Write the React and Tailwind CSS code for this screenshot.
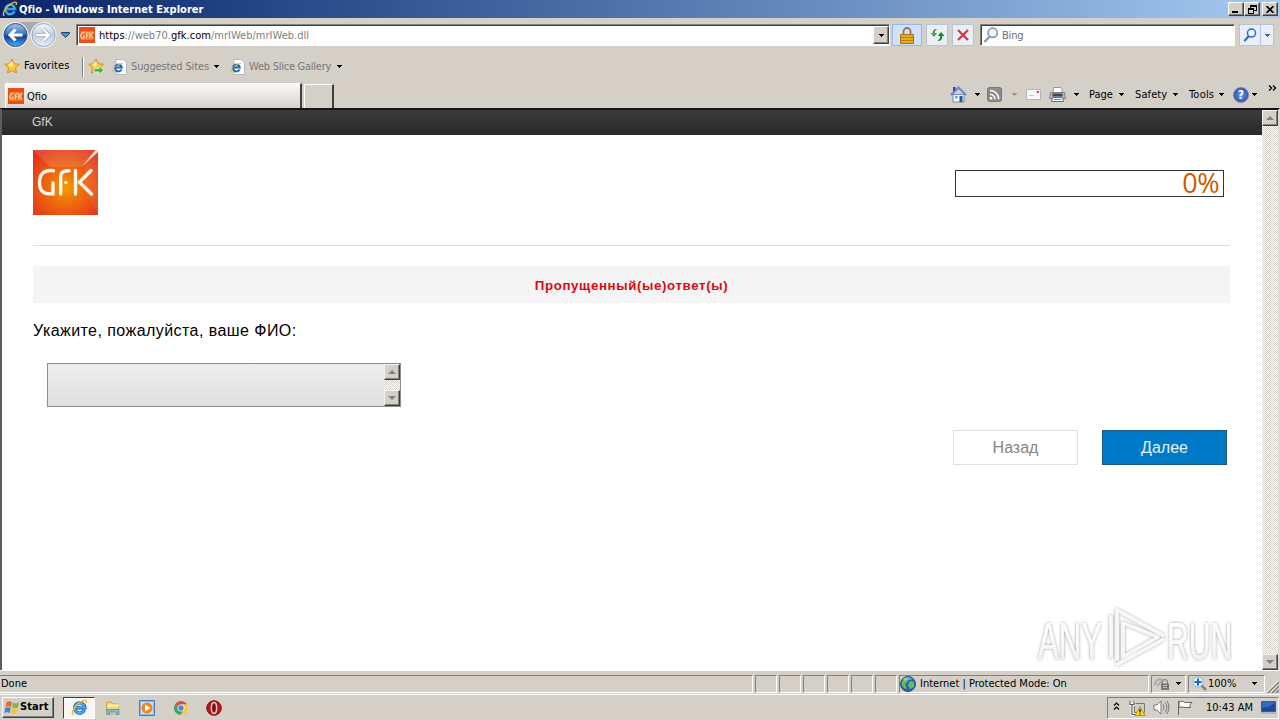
import clsx from "clsx";

const statusPanes = [1, 2, 3, 4, 5, 6];

function Caret({ className, color = "#000" }) {
  return (
    <svg width="6" height="3" viewBox="0 0 6 3" className={clsx("shrink-0", className)} shapeRendering="crispEdges">
      <path d="M0 0h6L3 3z" fill={color} />
    </svg>
  );
}

function IeLogo({ size, className }) {
  return (
    <svg width={size} height={size} viewBox="0 0 16 16" className={clsx("shrink-0", className)}>
      <path d="M12.6 10.4A4.8 4.8 0 1 1 13 8.2H4.6" fill="none" stroke="#1c5fb4" strokeWidth="3.2" />
      <path d="M12.4 10.4A4.7 4.7 0 1 1 12.8 8H4.8" fill="none" stroke="#4cb0ee" strokeWidth="1.7" />
      <path d="M2.6 14.6C-.8 14.4 3 6.500 8.600 3 12.500.4 15.800.4 14 4" fill="none" stroke="#eebc34" strokeWidth="1.4" />
    </svg>
  );
}

function IePage({ className }) {
  return (
    <svg width="15" height="16" viewBox="0 0 15 16" className={clsx("shrink-0", className)}>
      <path d="M4 .5h7l3.500 3V15.500H4z" fill="#fff" stroke="#b4b8be" />
      <path d="M9.500 10.500A3.400 3.400 0 1 1 9.800 8.500H3.400" fill="none" stroke="#1b69be" strokeWidth="2" />
      <path d="M1 13C0 10 5 5 11 4.500" fill="none" stroke="#e5b52c" />
    </svg>
  );
}

function GfkIcon({ className }) {
  return (
    <svg width="16" height="16" viewBox="0 0 16 16" className={clsx("shrink-0", className)}>
      <rect width="16" height="16" fill="#e94e1b" />
      <rect x="2" y="4" width="12" height="9" fill="#f27a24" />
      <g fill="none" stroke="#fbd3b8" strokeWidth="1.100">
        <path d="M5.500 5.500C1 4.500 1 11 3 11h2V8.500" />
        <path d="M7.500 11.500V7c0-1 .5-1.500 2-1.500M7.500 8.500H9" />
        <path d="M10.800 5v6.500M14.500 5 11.500 8.200l3 3.300" />
      </g>
    </svg>
  );
}

function GfkLogo() {
  return (
    <svg width="65" height="65" viewBox="0 0 65 65" className="shrink-0">
      <defs>
        <radialGradient id="gfk" cx="50%" cy="58%" r="66%">
          <stop offset="0" stopColor="#f59a00" />
          <stop offset=".4" stopColor="#ee6c0c" />
          <stop offset="1" stopColor="#e2321b" />
        </radialGradient>
      </defs>
      <rect width="65" height="65" fill="url(#gfk)" />
      <path d="M0 0h65L48 17H17z" fill="#fff" opacity=".12" />
      <path d="M65 0v65L52 40V13z" fill="#fff" opacity=".08" />
      <path d="M62.500 0H65v2L48 17.500z" fill="#fbd9c4" />
      <g fill="none" stroke="#fff6ec" strokeWidth="3.400" strokeLinecap="round">
        <path d="M20.500 20.700C11 19.500 6.500 24 6.500 32.500c0 8.500 4 12 13.500 11.300V33" />
        <path d="M27.700 44V27c0-4.500 2.500-6.500 8.500-6.300" />
        <path d="M42.500 20.500V44" />
        <path d="M58 20.500 46.500 32.300 58.500 44" />
      </g>
      <circle cx="33" cy="32.500" r="1.800" fill="#fff6ec" />
    </svg>
  );
}

function NavArrows() {
  return (
    <svg width="58" height="28" viewBox="0 0 58 28" className="ml-[1px] shrink-0">
      <defs>
        <linearGradient id="back" x2="0" y2="1">
          <stop offset="0" stopColor="#a8c6ea" />
          <stop offset=".45" stopColor="#3a75c4" />
          <stop offset=".55" stopColor="#0f3f94" />
          <stop offset="1" stopColor="#4fb0f0" />
        </linearGradient>
        <linearGradient id="fwd" x2="0" y2="1">
          <stop offset="0" stopColor="#f4f7fb" />
          <stop offset=".5" stopColor="#c3cede" />
          <stop offset="1" stopColor="#e6edf6" />
        </linearGradient>
      </defs>
      <path d="M14 1h28v7c-8 6-20 6-28 0z" fill="#a9a9b2" />
      <circle cx="14.500" cy="14" r="13" fill="#eef0f4" />
      <circle cx="42.500" cy="14" r="13" fill="#eef0f4" />
      <circle cx="14.500" cy="14" r="11.500" fill="url(#back)" stroke="#274f8d" />
      <circle cx="42.500" cy="14" r="11.500" fill="url(#fwd)" stroke="#9aa5b8" />
      <path d="M21.500 14H9.500M14.500 8.500 9 14l5.500 5.500" fill="none" stroke="#fff" strokeWidth="3" />
      <path d="M35.500 14h12M42.500 8.500 48 14l-5.500 5.500" fill="none" stroke="#98a4b6" strokeWidth="3.800" />
      <path d="M35.500 14h12M42.500 8.500 48 14l-5.500 5.500" fill="none" stroke="#fff" strokeWidth="2.400" />
    </svg>
  );
}

function Star({ add, className }) {
  return (
    <svg width="17" height="17" viewBox="0 0 17 17" className={clsx("shrink-0", className)}>
      <path d="M8 1l2.200 4.700 5.100.6-3.800 3.500 1 5.200L8 12.500 3.500 15l1-5.200L.8 6.300l5.100-.6z" fill="#fbc834" stroke="#d4881c" strokeWidth=".9" />
      <path d="M8 3.500 9.400 6.700 8 9 4 7z" fill="#fff1a0" />
      {add && <path d="M6 10.500h5V8l5 4-5 4.500v-2.500H6z" fill="#45b83c" stroke="#e8f7e2" strokeWidth=".8" />}
    </svg>
  );
}

function Magnifier({ size, color, className }) {
  return (
    <svg width={size} height={size} viewBox="0 0 16 16" className={clsx("shrink-0", className)}>
      <path d="M1.500 15 6.500 9.500" stroke={color} strokeWidth="2.500" />
      <circle cx="9.700" cy="5.800" r="4.600" fill="#edf6ff" stroke={color} strokeWidth="1.700" />
    </svg>
  );
}

function WinButton({ children, className }) {
  return (
    <div className={clsx("grid h-[14px] w-4 place-items-center border border-t-white border-r-[#404040] border-b-[#404040] border-l-white bg-[#d4d0c8] shadow-[inset_-1px_-1px_#808080]", className)}>
      {children}
    </div>
  );
}

function ScrollButton({ down }) {
  return (
    <div className="grid h-4 w-4 shrink-0 place-items-center border border-t-[#f4f2ee] border-r-[#404040] border-b-[#404040] border-l-[#f4f2ee] bg-[#d4d0c8] shadow-[inset_-1px_-1px_#808080]">
      <svg width="8" height="4" viewBox="0 0 8 4">
        <path d={down ? "M0 0h8L4 4z" : "M0 4h8L4 0z"} fill="#808080" />
      </svg>
    </div>
  );
}

function ScrollTrack({ className }) {
  return (
    <div className={clsx("flex w-4 shrink-0 flex-col justify-between bg-[repeating-conic-gradient(#fff_0_25%,#d4d0c8_0_50%)] bg-[length:2px_2px]", className)}>
      <ScrollButton />
      <ScrollButton down />
    </div>
  );
}

function TitleBar() {
  return (
    <div className="flex h-[18px] items-center bg-linear-to-r from-[#0a246a] to-[#a6caf0] pl-[2px]">
      <IeLogo size={16} />
      <div className="ml-[1px] flex-1 pt-[2px] text-[11px] font-bold tracking-[0.03px] whitespace-nowrap text-white">Qfio - Windows Internet Explorer</div>
      <WinButton>
        <svg width="8" height="8"><path d="M0 6h6v2H0z" /></svg>
      </WinButton>
      <WinButton>
        <svg width="9" height="9" fill="none" stroke="#000" shapeRendering="crispEdges"><path d="M2.500 3V.5h6v5H6M3 1.500h5M.5 3.500h5v5h-5zM1 4.500h4" /></svg>
      </WinButton>
      <WinButton className="mr-[2px] ml-[2px]">
        <svg width="8" height="7" stroke="#000" strokeWidth="1.600"><path d="M.5 0l7 7M7.500 0l-7 7" /></svg>
      </WinButton>
    </div>
  );
}

function AddressBar() {
  return (
    <div className="flex h-[34px] items-center">
      <NavArrows />
      <svg width="9" height="6" className="ml-[2px]"><path d="M.5.5h8v1L4.500 5.500.5 1.500z" fill="#4a92c8" stroke="#1c4472" /></svg>
      <div className="ml-[6px] flex h-[22px] w-[814px] items-center border border-t-[#808080] border-r-white border-b-white border-l-[#808080] bg-white shadow-[inset_1px_1px_#404040]">
        <GfkIcon className="ml-[2px]" />
        <div className="ml-[4px] flex-1 pt-[3px] text-[11px] tracking-[0.02px] whitespace-nowrap text-[#808080]">
          <span className="text-black">https</span>://web70.<span className="text-black">gfk.com</span>/mrIWeb/mrIWeb.dll
        </div>
        <div className="grid h-[18px] w-4 place-items-center border border-t-white border-r-[#404040] border-b-[#404040] border-l-white bg-[#d4d0c8] shadow-[inset_-1px_-1px_#808080]">
          <Caret />
        </div>
      </div>
      <div className="ml-[2px] grid h-[22px] w-[30px] place-items-center border border-[#94b8e8] bg-[#cfe2fb]">
        <svg width="14" height="17" viewBox="0 0 14 17">
          <path d="M3.500 8V4.500a3.500 3.500 0 0 1 7 0V8" fill="none" stroke="#8d7a45" strokeWidth="1.800" />
          <path d="M.5 7.500h13v9H.5z" fill="#e8aa25" stroke="#a97512" />
          <path d="M1 10.500h12M1 13.500h12" stroke="#b97f12" />
        </svg>
      </div>
      <div className="ml-[4px] grid h-[22px] w-[22px] place-items-center border border-[#b6c3da] bg-[#e9eef7]">
        <svg width="15" height="14" viewBox="0 0 15 14">
          <path d="M6.500 1C3.500 1 2.500 3 2.700 5H.5L4 9l3.200-4H5C4.800 3.500 5 2.500 6.500 2z" fill="#43a545" />
          <path d="M8 13c3 0 4.500-2 4.300-5H14.500L11 4 7.800 8H10c.2 2-.3 3.500-2 4z" fill="#23832b" />
        </svg>
      </div>
      <div className="ml-[4px] grid h-[22px] w-[22px] place-items-center border border-[#b6c3da] bg-[#e9eef7]">
        <svg width="12" height="12" stroke="#cb3a43" strokeWidth="2.200"><path d="M1 1l10 10M11 1 1 11" /></svg>
      </div>
      <div className="ml-[6px] flex h-[22px] w-[255px] items-center border border-t-[#808080] border-r-white border-b-white border-l-[#808080] bg-white shadow-[inset_1px_1px_#404040]">
        <Magnifier size={16} color="#8c9bb0" className="ml-[2px]" />
        <div className="ml-[3px] pt-[3px] text-[11px] tracking-[-0.2px] text-[#6d6d6d]">Bing</div>
      </div>
      <div className="ml-[4px] flex h-[22px] w-[35px] items-center border border-[#b6c3da] bg-[#e9eef7]">
        <Magnifier size={14} color="#2c68cf" className="ml-[3px]" />
        <div className="ml-[3px] grid h-full w-[13px] place-items-center border-l border-[#b6c3da]">
          <Caret color="#2b62ae" />
        </div>
      </div>
    </div>
  );
}

function FavoritesBar() {
  return (
    <div className="flex h-[29px] items-center text-[11px] whitespace-nowrap">
      <Star className="ml-[4px]" />
      <div className="ml-[3px] w-[58px] tracking-[0.1px]">Favorites</div>
      <div className="h-[20px] w-[2px] border-r border-l border-r-white border-l-[#808080]" />
      <Star add className="ml-[4px]" />
      <IePage className="ml-[7px]" />
      <div className="ml-[4px] w-[82px] pt-[1px] tracking-[-0.13px] text-[#777]">Suggested Sites</div>
      <Caret />
      <IePage className="ml-[11px]" />
      <div className="ml-[4px] w-[87px] pt-[1px] tracking-[-0.25px] text-[#777]">Web Slice Gallery</div>
      <Caret />
    </div>
  );
}

function TabRow() {
  return (
    <div className="flex h-[27px] items-end text-[11px] whitespace-nowrap">
      <div className="ml-[5px] flex h-[25px] w-[297px] items-center border-t border-r-2 border-l border-t-white border-r-[#404040] border-l-white bg-linear-to-b from-[#faf9f8] to-[#d6d2cb] pl-[2px]">
        <GfkIcon />
        <div className="ml-[3px] pt-[2px]">Qfio</div>
      </div>
      <div className="ml-[2px] h-[24px] w-[30px] border-t border-r-2 border-l border-t-white border-r-[#404040] border-l-white" />
      <div className="ml-auto flex h-[27px] items-center">
        <svg width="17" height="17" viewBox="0 0 17 17">
          <path d="M3 8.500h11V16H3z" fill="#f5f8fc" stroke="#7485a5" />
          <path d="M1 9 8.500 1.500 16 9" fill="none" stroke="#6889c4" strokeWidth="2" />
          <path d="M3 1h2.500v3L3 6z" fill="#2c4ca0" />
          <path d="M5 10h2.500v2.500H5z" fill="#57a2dc" />
          <path d="M9.500 10h3v6h-3z" fill="#26569d" />
        </svg>
        <Caret className="ml-[7px]" />
        <svg width="15" height="15" viewBox="0 0 15 15" className="ml-[7px]">
          <rect x=".5" y=".5" width="14" height="14" rx="2" fill="#8c8c8c" stroke="#777" />
          <g fill="none" stroke="#fff" strokeWidth="1.500"><path d="M3 7.200a5 5 0 0 1 5 5M3 3.500a8.700 8.700 0 0 1 8.700 8.700" /></g>
          <circle cx="4" cy="11.200" r="1.300" fill="#fff" />
        </svg>
        <Caret className="ml-[9px]" color="#9a968e" />
        <svg width="15" height="11" viewBox="0 0 15 11" className="ml-[9px]">
          <path d="M.5.5h14v10H.5z" fill="#f8f8f8" stroke="#b5b5b5" />
          <path d="M10.500 2h2.500v2h-2.500z" fill="#d0505c" /><path d="M3 6.500h5" stroke="#c4c4c4" />
        </svg>
        <svg width="17" height="16" viewBox="0 0 17 16" className="ml-[8px]">
          <path d="M4.500.5h7l1.500 2V7h-9z" fill="#fff" stroke="#8d99a8" />
          <path d="M1.500 5.500h14l1 6h-16z" fill="#b4b7bc" stroke="#7c828a" />
          <path d="M3.500 6.500h10v3h-10z" fill="#42474f" />
          <path d="M3.500 10.500h10l1 4h-12z" fill="#e8f4fb" stroke="#687786" />
          <path d="M5 12.500h7" stroke="#46a7c7" />
        </svg>
        <Caret className="ml-[7px]" />
        <div className="ml-[10px] w-[29px] pt-[2px] tracking-[-0.05px]">Page</div>
        <Caret />
        <div className="ml-[11px] w-[37px] pt-[2px] tracking-[0.1px]">Safety</div>
        <Caret />
        <div className="ml-[11px] w-[29px] pt-[2px] tracking-[0.2px]">Tools</div>
        <Caret />
        <div className="ml-[9px] grid h-4 w-4 place-items-center rounded-full border border-[#7484b4] bg-radial from-[#6b9ded] to-[#173b96] text-[12px] leading-none font-bold text-white">?</div>
        <Caret className="ml-[2px]" />
        <svg width="9" height="6" className="mr-[3px] mb-[13px] ml-[11px]" fill="none" stroke="#000" strokeWidth="1.300"><path d="M1 .5l2.500 2.500L1 5.500M5 .5l2.500 2.500L5 5.500" /></svg>
      </div>
    </div>
  );
}

function Watermark() {
  return (
    <svg width="208" height="66" viewBox="0 0 208 66" className="absolute top-[494px] left-[1030px]">
      <defs>
        <filter id="soft" x="-20%" y="-20%" width="140%" height="140%">
          <feDropShadow dx="0" dy="0" stdDeviation="1.500" floodColor="#000" floodOpacity=".42" />
        </filter>
        <linearGradient id="fade" x2="0" y2="1">
          <stop offset="0" stopColor="#fff" />
          <stop offset=".45" stopColor="#fcfcfc" />
          <stop offset="1" stopColor="#ebebeb" />
        </linearGradient>
      </defs>
      <g filter="url(#soft)" fill="url(#fade)" fontFamily="Liberation Sans, sans-serif" fontSize="51">
        <text transform="translate(6 55) scale(.61 1)">ANY</text>
        <text transform="translate(135 55) scale(.59 1)">RUN</text>
        <g fill="none" stroke="#f7f7f7" strokeWidth="3.500" strokeLinejoin="round">
          <path d="M91 19 126 33 91 53z" />
          <path d="M79 54V11M85 57V6l47 26M84 61l48-26" />
        </g>
      </g>
    </svg>
  );
}

function Survey() {
  return (
    <div className="relative flex h-[562px] border-t-2 border-r-2 border-l-2 border-t-[#151515] border-r-[#dedbd5] border-l-[#5c5c5c] bg-white font-['Liberation_Sans',Arial,sans-serif]">
      <div className="min-w-0 flex-1">
        <div className="flex h-[25px] items-center bg-linear-to-b from-[#3b3b3b] to-[#292929] pb-[1px] pl-[30px] text-[12px] text-[#d0d0d0]">GfK</div>
        <div className="mr-[32px] ml-[31px]">
          <div className="flex h-[111px] items-start justify-between border-b border-[#dedede] pt-[15px]">
            <GfkLogo />
            <div className="mt-[20px] mr-[6px] flex h-[27px] w-[269px] items-center justify-end border border-[#333] pr-[4px] pb-[2px] font-['Open_Sans',sans-serif] text-[27px] leading-none tracking-[-0.5px] text-[#d05800]">0%</div>
          </div>
          <div className="mt-[20px] flex h-[37px] items-center justify-center bg-[#f4f4f4] pt-[2px] text-[13.300px] font-bold tracking-[0.62px] text-[#dc0a12]">Пропущенный(ые)ответ(ы)</div>
          <div className="mt-[16px] h-6 text-[16px] leading-6 tracking-[0.44px] text-black">Укажите, пожалуйста, ваше ФИО:</div>
          <div className="mt-[20px] ml-[14px] flex h-[44px] w-[354px] justify-end border border-[#8c8c8c] bg-linear-to-b from-[#eeeeee] to-[#e0e0e0]">
            <ScrollTrack />
          </div>
          <div className="mt-[23px] mr-[3px] flex justify-end gap-6 text-[16px]">
            <button className="h-[35px] w-[125px] border border-[#dedede] bg-white text-[#858585]">Назад</button>
            <button className="h-[35px] w-[125px] border border-[#1c5582] bg-[#007ac6] text-[#e2f3ff]">Далее</button>
          </div>
        </div>
      </div>
      <ScrollTrack />
      <Watermark />
    </div>
  );
}

function Pane({ children, className }) {
  return (
    <div className={clsx("flex h-[18px] shrink-0 items-center border border-t-[#808080] border-r-white border-b-white border-l-[#808080]", className)}>{children}</div>
  );
}

function StatusBar() {
  return (
    <div className="flex h-[24px] items-center gap-[2px] border-t border-white pt-[2px] text-[11px] whitespace-nowrap">
      <Pane className="w-[753px] border-l-0 pt-[1px] pl-[1px]">Done</Pane>
      {statusPanes.map((pane) => <Pane key={pane} className="w-[22px]" />)}
      <Pane className="w-[250px]">
        <svg width="16" height="16" viewBox="0 0 16 16">
          <circle cx="8" cy="8" r="7.500" fill="#2766b5" stroke="#285075" />
          <path d="M3 3c3-2 6-1 5 2L5 8l2 5c-3 0-6-4-5-7zM10 5l4 1v5l-4 2-2-4z" fill="#63bf55" />
          <path d="M4 2.500C7 .5 11 1 12 4 9 3 7 4 4 5z" fill="#a9dcf3" opacity=".7" />
        </svg>
        <div className="ml-[4px] pt-[1px]">Internet | Protected Mode: On</div>
      </Pane>
      <Pane className="w-[35px]">
        <svg width="17" height="15" viewBox="0 0 17 15" className="ml-[2px]">
          <path d="M1 9c0-5 4-7 8-5M3 10l5-5" fill="none" stroke="#aaa" strokeWidth="2" />
          <path d="M8.500 8V6a2.500 2.500 0 0 1 5 0v2" fill="none" stroke="#777" />
          <path d="M7 7.500h8V14H7z" fill="#777" /><path d="M9 9.500h4M9 11.500h4" stroke="#bbb" />
        </svg>
        <Caret className="ml-[4px]" />
      </Pane>
      <Pane className="w-[77px]">
        <svg width="15" height="15" viewBox="0 0 15 15" className="ml-[3px]">
          <path d="M9 9l5 5" stroke="#9a8057" strokeWidth="2.500" />
          <circle cx="6" cy="6" r="5" fill="#e8f3ff" stroke="#8cb4e4" />
          <path d="M6 2.500v7M2.500 6h7" stroke="#1869cf" strokeWidth="2" />
        </svg>
        <div className="ml-[1px] w-[43px] pt-[1px]">100%</div>
        <Caret />
      </Pane>
      <svg width="12" height="12" className="mt-[6px]" strokeWidth="1.500"><path d="M1 12 12 1M5 12l7-7M9 12l3-3" stroke="#808080" /><path d="M0 11 11 0M4 11l7-7" stroke="#fff" strokeWidth=".7" /></svg>
    </div>
  );
}

function Taskbar() {
  return (
    <div className="flex h-[26px] items-center border-t border-white text-[11px] whitespace-nowrap">
      <div className="ml-[2px] flex h-[21px] w-[52px] items-center border border-t-white border-r-[#404040] border-b-[#404040] border-l-white pl-[1px] font-bold shadow-[inset_-1px_-1px_#808080]">
        <svg width="16" height="15" viewBox="0 0 16 15">
          <path d="M2.500 2Q5 .5 8 2L7 7Q4 5.500 1.500 7z" fill="#eb6a2d" />
          <path d="M9 2.300Q12 4 15 2.300L14 7.500Q11 9 8 7.300z" fill="#85b944" />
          <path d="M1.200 8Q4 6.500 6.700 8L5.700 13Q3 11.500.2 13z" fill="#4389d0" />
          <path d="M7.800 8.300Q11 10 13.800 8.500L12.700 13.500Q9.500 15 6.700 13.300z" fill="#f5c431" />
        </svg>
        <div className="tracking-[0.1px]">Start</div>
      </div>
      <div className="ml-[9px] grid h-[22px] w-[32px] place-items-center border border-t-[#404040] border-r-white border-b-white border-l-[#404040] bg-[#f8f7f5]">
        <IeLogo size={17} />
      </div>
      <svg width="16" height="16" viewBox="0 0 16 16" className="ml-[10px]">
        <path d="M1.500 2h5l1 2h6v10h-12z" fill="#f3d974" stroke="#c9a94a" />
        <path d="M3 5.500h11" stroke="#fff5c4" strokeWidth="2" />
        <path d="M2 14.500V9.500h12v5h-2.500V12h-7v2.500z" fill="#79bce5" stroke="#4b94c5" strokeWidth=".8" />
      </svg>
      <svg width="16" height="16" viewBox="0 0 16 16" className="ml-[18px]">
        <path d="M.5.5h15v15H.5z" fill="#8bb9e5" stroke="#477fb5" />
        <path d="M2 2h12v12H2z" fill="#c9e1f6" />
        <circle cx="8" cy="8" r="5.500" fill="#f0841e" />
        <path d="M6 4.500 11.500 8 6 11.500z" fill="#fff" />
      </svg>
      <svg width="16" height="16" viewBox="0 0 16 16" className="ml-[18px]">
        <path d="M8 8 2 4.400A7 7 0 0 1 14 4.500H8z" fill="#de4b3c" />
        <path d="M8 8 2 4.400A7 7 0 0 0 7.500 15L11 9.500z" fill="#3ba55a" />
        <path d="M8 4.500h6A7 7 0 0 1 7.500 15L11 9.500z" fill="#f6cb38" />
        <circle cx="8" cy="8" r="3.500" fill="#f5f5f5" /><circle cx="8" cy="8" r="2.700" fill="#4686e2" />
      </svg>
      <svg width="16" height="16" viewBox="0 0 16 16" className="ml-[17px]">
        <circle cx="8" cy="8" r="7.300" fill="#b8161c" stroke="#861014" />
        <ellipse cx="8" cy="8" rx="2.600" ry="5.400" fill="#7c0c12" stroke="#f0cfcc" strokeWidth="1.500" />
      </svg>
      <div className="mr-[1px] ml-auto flex h-[22px] w-[172px] items-center border border-t-[#808080] border-r-white border-b-white border-l-[#808080]">
        <svg width="7" height="8" className="mb-[3px] ml-[5px]" fill="none" stroke="#000" strokeWidth="1.200"><path d="M1 3.500 3.500 1 6 3.500M1 7.500 3.500 5 6 7.500" /></svg>
        <svg width="17" height="16" viewBox="0 0 17 16" className="ml-[9px]">
          <path d="M5.500 3.500h10v9h-10z" fill="#cfcfc9" stroke="#777" />
          <path d="M1 .5v4h4v-4M3 4.500v10h4" fill="none" stroke="#fff" strokeWidth="2.500" />
          <path d="M1 .5v4h4v-4M3 4.500v10h4" fill="none" stroke="#555" strokeWidth="1.100" />
          <path d="M11 6.500l5 9H6z" fill="#ffde24" stroke="#a08214" strokeWidth=".8" /><path d="M11 9v3.500M11 13.500v1" stroke="#111" strokeWidth="1.300" />
        </svg>
        <svg width="17" height="15" viewBox="0 0 17 15" className="ml-[7px]" fill="none" stroke="#777">
          <path d="M1 5h3l4-4v13l-4-4H1z" fill="#fff" /><path d="M10 4.500q2 3 0 6M12 2.500q4 5 0 10M14 1q4 6 0 13" />
        </svg>
        <svg width="17" height="15" viewBox="0 0 17 15" className="ml-[7px]" fill="#fafafa" stroke="#666"><path d="M1.500 1v14M2 1.500q4-1 6 1h7l-2.500 3 1 2H8q-3-1-6 0z" /></svg>
        <div className="ml-[12px] w-[55px] pt-[1px]">10:43 AM</div>
        <svg width="15" height="13" viewBox="0 0 15 13"><path d="M.5.5h14v10H.5z" fill="#2f6dbc" stroke="#4a5a70" /><path d="M1 7q8-1 13-5v8H1z" fill="#1c479c" /><path d="M0 12h15" stroke="#999" /></svg>
      </div>
    </div>
  );
}

export default function App() {
  return (
    <div className="flex h-[720px] w-[1280px] flex-col overflow-hidden bg-[#d4d0c8] font-['DejaVu_Sans_Condensed','Noto_Sans',sans-serif] text-black">
      <TitleBar />
      <AddressBar />
      <FavoritesBar />
      <TabRow />
      <Survey />
      <StatusBar />
      <Taskbar />
    </div>
  );
}
